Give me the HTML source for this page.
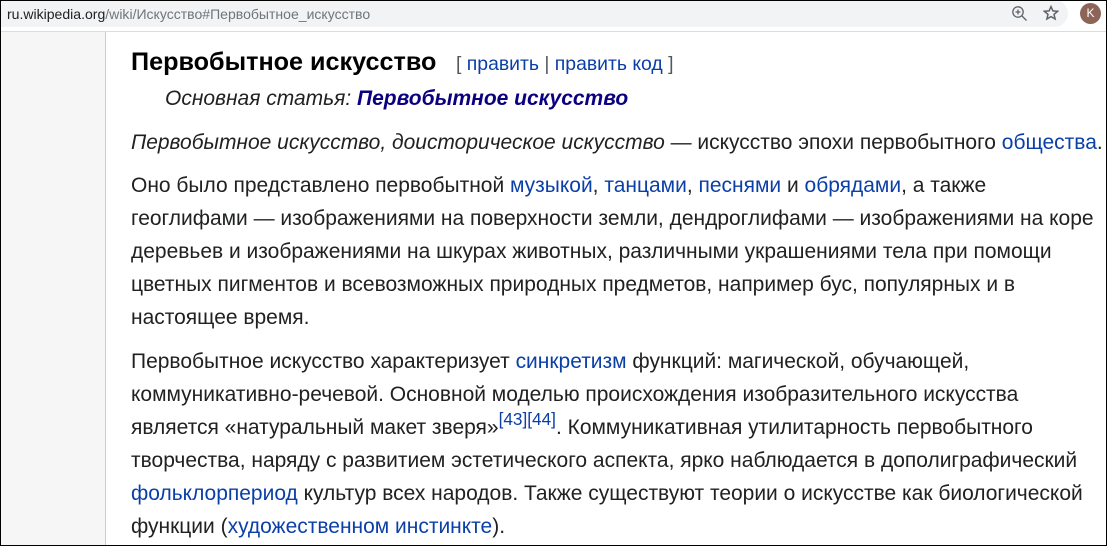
<!DOCTYPE html>
<html><head><meta charset="utf-8">
<style>
html,body{margin:0;padding:0;background:#fff}
#p{position:relative;width:1107px;height:546px;overflow:hidden;background:#fff;font-family:"Liberation Sans","Noto Sans CJK SC",sans-serif;color:#202122}
.l{position:absolute;left:131px;white-space:nowrap;font-size:20.99px;line-height:33px;height:33px}
a{color:#0b3fa8;text-decoration:none}
sup{font-size:17.2px;line-height:0;position:relative;top:-1px;vertical-align:super}
</style></head><body><div id="p">
<div style="position:absolute;left:0;top:0;width:1068px;height:27px;background:#f1f3f4;border-radius:0 14px 14px 0"></div>
<div style="position:absolute;left:1px;top:32px;width:104px;height:514px;background:#f6f6f6"></div>
<div style="position:absolute;left:105px;top:32px;width:1px;height:514px;background:#a7d7f9"></div>
<div style="position:absolute;left:1px;top:31px;width:1106px;height:1px;background:#dadce0"></div>
<div style="position:absolute;left:7px;top:3px;font-size:14.04px;line-height:22px;white-space:nowrap;color:#70757a"><span style="color:#202124">ru.wikipedia.org</span>/wiki/Искусство#Первобытное_искусство</div>
<svg style="position:absolute;left:1010px;top:4px" width="18" height="18" viewBox="0 0 18 18" fill="none" stroke="#5f6368" stroke-width="1.3"><circle cx="8" cy="8" r="5.2"/><path d="M12 12l4.5 4.5M5.5 8h5M8 5.5v5"/></svg>
<svg style="position:absolute;left:1043px;top:5px" width="16" height="16" viewBox="0 0 16 16" fill="none" stroke="#5f6368" stroke-width="1.5"><path d="M8 1.6l1.9 4.3 4.7.4-3.6 3.1 1.1 4.6L8 11.6l-4.1 2.4 1.1-4.6-3.6-3.1 4.7-.4z"/></svg>
<div style="position:absolute;left:1080px;top:3px;width:21px;height:21px;border-radius:50%;background:#8d6558;color:#fff;font-size:12px;line-height:21px;text-align:center">K</div>

<div class="l" style="top:46px;font-size:25.2px;font-weight:bold;color:#000">Первобытное искусство</div>
<div class="l" style="left:456px;top:48px;font-size:19.4px;color:#54595d">[ <a href="#">править</a> | <a href="#">править код</a> ]</div>
<div class="l" style="left:165px;top:82px;font-style:italic">Основная статья: <a href="#" style="font-weight:bold;color:#0b0080">Первобытное искусство</a></div>
<div class="l" style="top:126px"><i>Первобытное искусство, доисторическое искусство</i> — искусство эпохи первобытного <a href="#">общества</a>.</div>
<div class="l" style="top:169px">Оно было представлено первобытной <a href="#">музыкой</a>, <a href="#">танцами</a>, <a href="#">песнями</a> и <a href="#">обрядами</a>, а также</div>
<div class="l" style="top:202px">геоглифами — изображениями на поверхности земли, дендроглифами — изображениями на коре</div>
<div class="l" style="top:235px">деревьев и изображениями на шкурах животных, различными украшениями тела при помощи</div>
<div class="l" style="top:268px">цветных пигментов и всевозможных природных предметов, например бус, популярных и в</div>
<div class="l" style="top:301px">настоящее время.</div>
<div class="l" style="top:345px">Первобытное искусство характеризует <a href="#">синкретизм</a> функций: магической, обучающей,</div>
<div class="l" style="top:378px">коммуникативно-речевой. Основной моделью происхождения изобразительного искусства</div>
<div class="l" style="top:411px">является «натуральный макет зверя»<sup><a href="#">[43]</a><a href="#">[44]</a></sup>. Коммуникативная утилитарность первобытного</div>
<div class="l" style="top:444px">творчества, наряду с развитием эстетического аспекта, ярко наблюдается в дополиграфический</div>
<div class="l" style="top:477px"><a href="#">фольклорпериод</a> культур всех народов. Также существуют теории о искусстве как биологической</div>
<div class="l" style="top:510px">функции (<a href="#">художественном инстинкте</a>).</div>

<div style="position:absolute;left:0;top:0;width:1107px;height:1px;background:#000"></div>
<div style="position:absolute;left:0;top:0;width:1px;height:546px;background:#000"></div>
<div style="position:absolute;left:1106px;top:0;width:1px;height:546px;background:#000"></div>
<div style="position:absolute;left:0;top:545px;width:1107px;height:1px;background:#000"></div>
</div></body></html>
